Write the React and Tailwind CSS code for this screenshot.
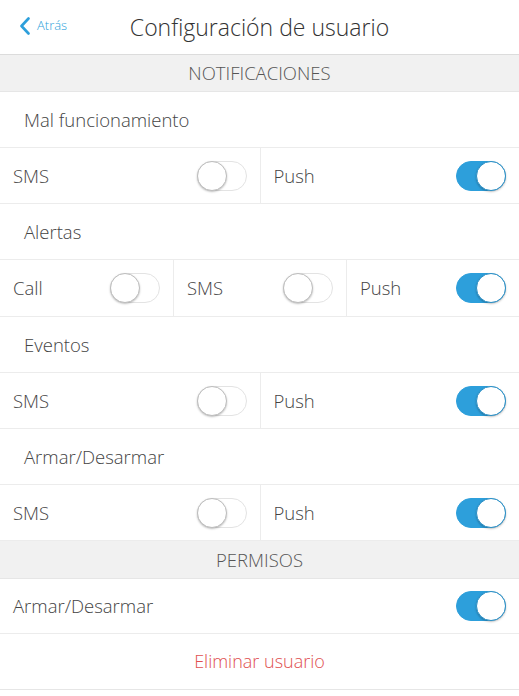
import { useState } from "react";

const FONT = { fontFamily: '"Open Sans", "Noto Sans", sans-serif' };

function Toggle({ on, onChange }) {
  return (
    <button
      type="button"
      onClick={onChange}
      className={`relative h-[30px] w-[50px] shrink-0 rounded-full border transition-colors ${
        on ? "border-[#2d9fdb] bg-[#2d9fdb]" : "border-[#e3e3e3] bg-white"
      }`}
    >
      <span
        className={`absolute top-[-1px] h-[30px] w-[30px] rounded-full border bg-white shadow-[0_1px_2px_rgba(0,0,0,0.25)] ${
          on ? "right-[-1px] border-[#2a8fc6]" : "left-[-1px] border-[#bdbdbd]"
        }`}
      />
    </button>
  );
}

function SectionHeader({ children }) {
  return (
    <div className="flex h-[37px] items-center justify-center border-b border-[#e6e6e6] bg-[#f1f1f1] text-[18.5px] font-light text-[#555]">
      {children}
    </div>
  );
}

function SubHeader({ children }) {
  return (
    <div className="flex h-[56px] items-center border-b border-[#ececec] pl-6 text-[18.5px] font-light text-[#444]">
      {children}
    </div>
  );
}

function ToggleRow({ items, values, onToggle, tall }) {
  return (
    <div
      className={`grid border-b border-[#ececec] ${tall ? "h-[57px]" : "h-[56px]"} ${
        items.length === 3 ? "grid-cols-3" : "grid-cols-2"
      }`}
    >
      {items.map((label, i) => (
        <div
          key={label}
          className={`flex items-center justify-between pl-[13px] pr-[13px] ${i > 0 ? "border-l border-[#ececec]" : ""}`}
        >
          <span className="text-[18.5px] font-light text-[#444]">{label}</span>
          <Toggle on={values[i]} onChange={() => onToggle(i)} />
        </div>
      ))}
    </div>
  );
}

export default function App() {
  const [groups, setGroups] = useState({
    mal: [false, true],
    alertas: [false, false, true],
    eventos: [false, true],
    armar: [false, true],
  });
  const [perm, setPerm] = useState(true);

  function flip(key, i) {
    setGroups((g) => ({ ...g, [key]: g[key].map((v, j) => (j === i ? !v : v)) }));
  }

  return (
    <div className="min-h-screen w-[519px] bg-white" style={FONT}>
      <div className="relative flex h-[55px] items-center justify-center border-b border-[#dcdcdc]">
        <button type="button" className="absolute left-[19px] top-[16px] flex items-center gap-[6px] text-[13px] font-light text-[#2d9fdb]">
          <svg width="12" height="18" viewBox="0 0 12 18" fill="none">
            <path d="M9.5 1.5 L2.5 9 L9.5 16.5" stroke="#2d9fdb" strokeWidth="2.6" strokeLinecap="round" strokeLinejoin="round" />
          </svg>
          <span>Atrás</span>
        </button>
        <h1 className="text-[23px] font-light text-[#333]">Configuración de usuario</h1>
      </div>

      <SectionHeader>NOTIFICACIONES</SectionHeader>
      <SubHeader>Mal funcionamiento</SubHeader>
      <ToggleRow items={["SMS", "Push"]} values={groups.mal} onToggle={(i) => flip("mal", i)} />
      <SubHeader>Alertas</SubHeader>
      <ToggleRow items={["Call", "SMS", "Push"]} values={groups.alertas} onToggle={(i) => flip("alertas", i)} tall />
      <SubHeader>Eventos</SubHeader>
      <ToggleRow items={["SMS", "Push"]} values={groups.eventos} onToggle={(i) => flip("eventos", i)} />
      <SubHeader>Armar/Desarmar</SubHeader>
      <ToggleRow items={["SMS", "Push"]} values={groups.armar} onToggle={(i) => flip("armar", i)} />

      <div className="flex h-[38px] items-center justify-center border-b border-[#e6e6e6] bg-[#f1f1f1] text-[18.5px] font-light text-[#555]">
        PERMISOS
      </div>
      <div className="flex h-[55px] items-center justify-between border-b border-[#ececec] pl-[13px] pr-[13px]">
        <span className="text-[18.5px] font-light text-[#444]">Armar/Desarmar</span>
        <Toggle on={perm} onChange={() => setPerm(!perm)} />
      </div>
      <div className="flex h-[56px] items-center justify-center border-b border-[#e6e6e6] text-[18px] font-light text-[#e04f4f]">
        Eliminar usuario
      </div>
    </div>
  );
}
